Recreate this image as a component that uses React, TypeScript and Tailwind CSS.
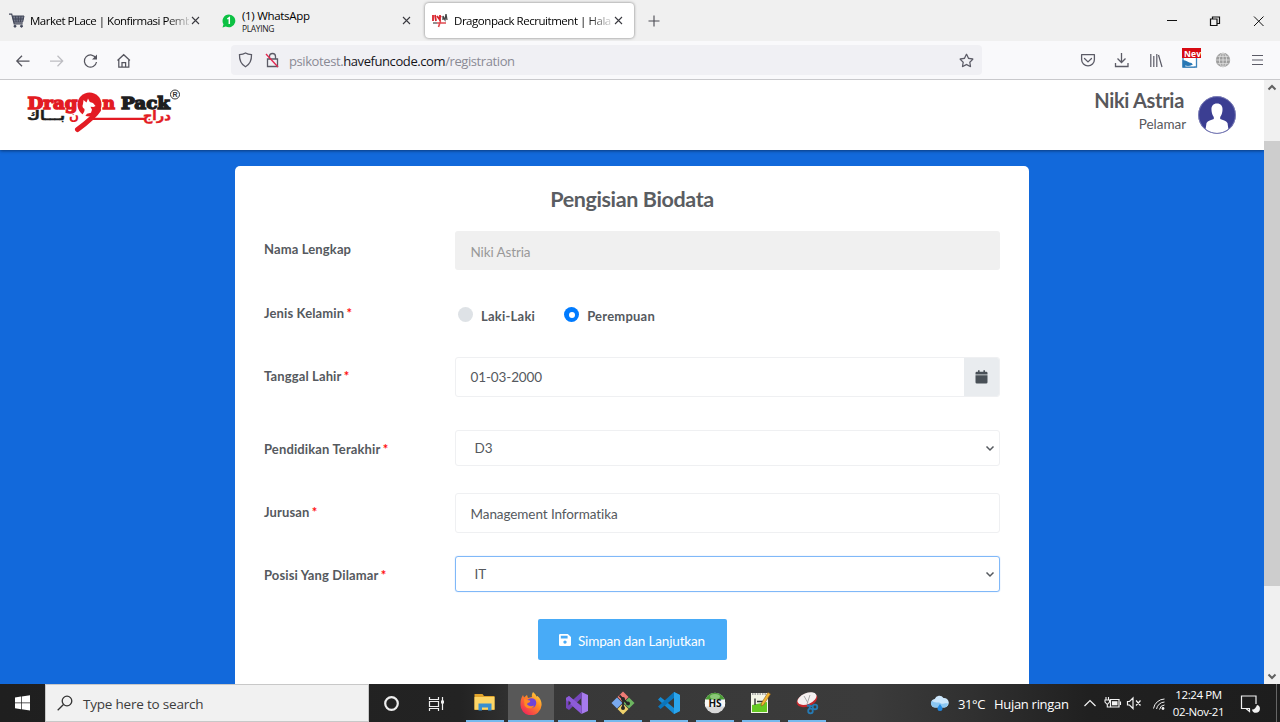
import React from "react";
import { FaRegStar } from "react-icons/fa";

const UI = "font-['Open_Sans','Noto_Sans',sans-serif]";

function Close() {
  return (
    <svg width="9" height="9" viewBox="0 0 9 9" className="shrink-0" fill="none" stroke="#3a3a40" strokeWidth="1.1">
      <path d="M1 1l7 7M8 1l-7 7" />
    </svg>
  );
}

function TabBar() {
  return (
    <div className={`flex h-[41px] w-full shrink-0 bg-[#f0f0f0] text-black ${UI}`}>
      <div className="flex w-[212px] shrink-0 items-center pl-[9px]">
        <svg width="16" height="16" viewBox="0 0 16 16" className="shrink-0" fill="none" stroke="#414658">
          <path d="M0 1.2h2.7l2.5 9.6h8.5" strokeWidth="1.2" />
          <path d="M3.5 3H15l-1.4 6.2H5z" fill="#777c8d" strokeWidth="1" />
          <path d="M6.5 3l.6 6M9.3 3v6M12 3l-.6 6M4 6h10.3" strokeWidth="1" />
          <circle cx="6" cy="13.2" r="1" fill="#414658" />
          <circle cx="12.5" cy="13.2" r="1" fill="#414658" />
        </svg>
        <div className="ml-[5px] w-[159px] overflow-hidden whitespace-nowrap text-[11.5px] leading-[16px] tracking-[-0.5px] [mask-image:linear-gradient(90deg,#000_86%,rgba(0,0,0,0.15)_100%)]">
          Market PLace | Konfirmasi Pemb
        </div>
        <div className="ml-[2px]"><Close /></div>
      </div>
      <div className="flex w-[212px] shrink-0 items-center pl-[10px]">
        <svg width="14" height="14" viewBox="0 0 14 14" className="shrink-0">
          <path d="M7 .5a6.4 6.4 0 1 1-3.2 12L.5 13.4l1-3.2A6.4 6.4 0 0 1 7 .5z" fill="#0cc143" />
          <path d="M5.300 5l2-1.400V10" stroke="#fff" strokeWidth="1.500" fill="none" />
        </svg>
        <div className="ml-[6px] w-[160px] pt-[2px]">
          <div className="text-[11.5px] leading-[14px] tracking-[-0.3px]">(1) WhatsApp</div>
          <div className="text-[8.5px] leading-[11px] tracking-[-0.35px] text-[#222]">PLAYING</div>
        </div>
        <Close />
      </div>
      <div className="mt-[3px] ml-px flex h-[35px] w-[209px] shrink-0 items-center rounded-[4px] bg-white pl-[7px] shadow-[0_0_3px_rgba(0,0,0,0.5)]">
        <svg width="16" height="15" viewBox="0 0 16 15" className="shrink-0">
          <path d="M1 2v6M3 2l1 6M5 3l3 4M8 2v6M7 6l2-3" stroke="#d9242d" strokeWidth="1.800" fill="none" />
          <path d="M11 7V3l2 4 1-6 1 6" stroke="#444" strokeWidth="1.300" fill="none" />
          <path d="M1 10h4" stroke="#555" strokeWidth="1.3" />
          <path d="M5 10h9M8.500 8l-2 6" stroke="#e04a50" strokeWidth="1.6" />
        </svg>
        <div className="ml-[6px] w-[157px] overflow-hidden whitespace-nowrap text-[11.5px] leading-[16px] tracking-[-0.46px] [mask-image:linear-gradient(90deg,#000_84%,rgba(0,0,0,0.15)_100%)]">
          Dragonpack Recruitment | Hala
        </div>
        <div className="ml-[3px]"><Close /></div>
      </div>
      <div className="flex w-[40px] items-center justify-center">
        <svg width="12" height="12" viewBox="0 0 12 12" stroke="#4a4a52" strokeWidth="1.1"><path d="M6 .5v11M.5 6h11" /></svg>
      </div>
      <div className="ml-auto flex w-[130px] items-center">
        <svg width="130" height="20" viewBox="0 0 130 20" fill="none" stroke="#111" strokeWidth="1">
          <path d="M17 9.500h10" />
          <path d="M60.500 8h6.500v6.500h-6.500zM62.500 8v-2h7v6.500h-2.500" strokeWidth="1.2" />
          <path d="M104 5.500l9.500 9.500M113.500 5.500l-9.500 9.500" strokeWidth="1" />
        </svg>
      </div>
    </div>
  );
}

function Toolbar() {
  return (
    <div className={`flex h-[39px] w-full shrink-0 items-center border-b border-[#c9c9cc] bg-[#f9f9fb] ${UI}`}>
      <svg width="231" height="38" viewBox="0 41 231 38" className="shrink-0" fill="none" stroke="#55555e" strokeWidth="1.250">
        <path d="M29.500 61H17M22 55.800L16.800 61l5.200 5.200" />
        <path d="M50 61h12.500M57.500 55.800l5.200 5.200-5.200 5.200" stroke="#bdbdc2" />
        <path d="M96 58.500a6.100 6.100 0 1 0 .5 3.500" />
        <path d="M97 54.500v5h-5z" fill="#55555e" stroke="none" />
        <path d="M117.500 60.500l6.200-5.800 6.200 5.800M118.800 59.500v7.500h10v-7.500M122 67v-4.500h3.600V67" />
      </svg>
      <div className="flex h-[30px] w-[751px] shrink-0 items-center rounded-[4px] bg-[#f0f0f4] pl-[7px]">
        <svg width="44" height="20" viewBox="0 0 44 20" className="shrink-0" fill="none" stroke="#5b5b66" strokeWidth="1.300">
          <path d="M7.500 3c2 1.300 4 1.600 6 1.700.2 5.500-1.500 9.500-6 12-4.500-2.500-6.200-6.500-6-12 2-.1 4-.4 6-1.700z" />
          <path d="M29.500 9h10v7.500h-10zM31.500 9V6.500a3 3 0 0 1 6 0V9" />
          <path d="M28 4l12 13" stroke="#e22850" strokeWidth="1.400" />
        </svg>
        <div className="ml-[7px] pt-[2px] text-[13px] leading-[18px] tracking-[-0.41px] text-[#8a8a94]">
          psikotest.<span className="text-[#15141a]">havefuncode.com</span>/registration
        </div>
        <FaRegStar className="mr-[8px] ml-auto text-[#5b5b66]" size={15} />
      </div>
      <svg width="210" height="38" viewBox="1070 41 210 38" className="ml-auto shrink-0" fill="none" stroke="#5b5b66" strokeWidth="1.300">
        <path d="M1081.600 54.700h12.800v4.800a6.400 6.400 0 0 1-12.800 0zM1084.500 58.500l3.500 3.400 3.500-3.400" strokeLinejoin="round" strokeLinecap="round" />
        <path d="M1121.500 53v9M1117.500 58.500l4 4 4-4M1115.500 63v3.500h12.500V63" />
        <path d="M1150.800 54v13M1153.800 56v11M1156.800 54v13M1158.500 55l3.500 12" strokeWidth="1.200" />
        <path d="M1183 55h13.500v12h-13.500z" fill="#fff" stroke="#3c83bb" />
        <path d="M1182.500 60c4 0 6 3 9 3l4 4.500h-13z" fill="#2877b4" stroke="none" />
        <path d="M1185 65.500c4 1 8 0 9.500-3v4h-9z" fill="#fff" stroke="none" />
        <path d="M1182 48h19v10h-19z" fill="#d70a13" stroke="none" />
        <text x="1184" y="56.500" fontSize="8.500" fontWeight="bold" fill="#fff" stroke="none" fontFamily="Open Sans" textLength="17">Nev</text>
        <circle cx="1223" cy="60" r="7.200" fill="#9d9d9d" stroke="none" />
        <path d="M1223 53v14M1216 60h14M1217.500 56.300h11M1217.500 63.700h11" stroke="#e4e4e4" strokeWidth=".8" />
        <ellipse cx="1223" cy="60" rx="3.600" ry="7" stroke="#e4e4e4" strokeWidth=".8" />
        <path d="M1252 55.500h11M1252 60h11M1252 64.500h11" strokeWidth="1.200" />
      </svg>
    </div>
  );
}

function Logo() {
  return (
    <svg width="160" height="46" viewBox="24 87 160 46" className="mt-[7px] ml-[24px] shrink-0">
      <g fontFamily="DejaVu Serif" fontWeight="bold" fontSize="17" strokeWidth="1.400">
        <text x="27.500" y="109.300" fill="#e31b23" stroke="#e31b23" textLength="50" lengthAdjust="spacingAndGlyphs">Drag</text>
        <text x="102.500" y="109.300" fill="#e31b23" stroke="#e31b23" textLength="12.500" lengthAdjust="spacingAndGlyphs">n</text>
        <text x="121" y="109.300" fill="#1e1e1e" stroke="#1e1e1e" textLength="49" lengthAdjust="spacingAndGlyphs">Pack</text>
      </g>
      <circle cx="89.500" cy="104.500" r="12" fill="#e31b23" />
      <path d="M80 119c1-4 5-6 4.500-10-2-1-2.500-3-1.500-5l.5-4 3 2.500 1.500-4 1.800 3.500 3.200 1 2.500 3-2 1-3-.3 1.500 3-1 3-4 1-3 4z" fill="#fff" />
      <path d="M98.500 110c-4 6.500-11.500 12.500-21 19.500" stroke="#e31b23" strokeWidth="5" strokeLinecap="round" fill="none" />
      <path d="M90 118.800h55" stroke="#e31b23" strokeWidth="2.200" />
      <g fontFamily="DejaVu Sans" fontWeight="bold" fontSize="13">
        <text x="143" y="120" fill="#e31b23" stroke="#e31b23" strokeWidth=".4" textLength="28" lengthAdjust="spacingAndGlyphs">دراج</text>
        <text x="69" y="119.500" fill="#e31b23" textLength="10" lengthAdjust="spacingAndGlyphs">ن</text>
        <text x="27" y="120" fill="#1e1e1e" stroke="#1e1e1e" strokeWidth=".4" textLength="38" lengthAdjust="spacingAndGlyphs">بـــاك</text>
      </g>
      <circle cx="175" cy="94.500" r="4.500" fill="none" stroke="#333" strokeWidth="1" />
      <text x="175" y="97" textAnchor="middle" fontSize="7" fontWeight="bold" fill="#333" fontFamily="Liberation Sans">R</text>
    </svg>
  );
}

function Header() {
  return (
    <header className="relative flex h-[70px] shrink-0 bg-white shadow-[0_1px_3px_rgba(0,0,0,0.45)]">
      <Logo />
      <div className="mt-[8px] mr-[12px] ml-auto text-right text-[#58585c]">
        <div className="mr-[2px] text-[20px] leading-[25px] font-bold tracking-[-0.3px]">Niki Astria</div>
        <div className="mt-[2px] text-[13.500px] leading-[18px] tracking-[-0.05px]">Pelamar</div>
      </div>
      <svg width="38" height="38" viewBox="0 0 38 38" className="mt-[16px] mr-[28px]">
        <circle cx="19" cy="19" r="18.800" fill="#3b3e92" />
        <path d="M19 7.500c3.800 0 5.800 2.500 5.500 6.500-.2 4-2 8.500-5.500 8.500s-5.300-4.500-5.500-8.500c-.3-4 1.700-6.500 5.500-6.500z" fill="#fff" />
        <path d="M15.800 19h6.400v4c2.500 1.200 6 1.600 7.300 4l.9 6a18 18 0 0 1-22.800 0l.9-6c1.300-2.400 4.800-2.800 7.300-4z" fill="#fff" />
        <circle cx="19" cy="19" r="18.400" fill="none" stroke="#8385bb" strokeWidth=".8" />
      </svg>
    </header>
  );
}

function Row({ label, required, children }: { label: string; required?: boolean; children: React.ReactNode }) {
  return (
    <div className="flex h-[63px] items-start">
      <div className="w-[190.500px] shrink-0 pt-[10px] text-[13px] leading-[18px] font-bold tracking-[0.13px] text-[#55595e]">
        {label}
        {required && <span className="-ml-px text-[#f11]"> *</span>}
      </div>
      <div className="w-[545.500px]">{children}</div>
    </div>
  );
}

function Select({ value, focused }: { value: string; focused?: boolean }) {
  return (
    <div className={`flex h-[36px] items-center justify-between rounded-[3px] border pr-[4px] pl-[19px] text-[13.500px] leading-[18px] ${focused ? "border-[#80b8f8] shadow-[0_0_1px_#80b8f8]" : "border-[#eff0f2]"}`}>
      <span>{value}</span>
      <svg width="10" height="7" viewBox="0 0 10 7" fill="none" stroke="#55595e" strokeWidth="1.500"><path d="M1.500 1.500L5 5l3.500-3.500" /></svg>
    </div>
  );
}

function Radio({ label, checked }: { label: string; checked?: boolean }) {
  return (
    <div className="flex items-center">
      <span className={`flex size-[15px] items-center justify-center rounded-full ${checked ? "bg-[#007bff]" : "bg-[#dee2e6]"}`}>
        {checked && <span className="size-[6px] rounded-full bg-white" />}
      </span>
      <span className="ml-[8px] pt-[2px] text-[13px] leading-[18px] font-bold tracking-[0.23px] text-[#55595e]">{label}</span>
    </div>
  );
}

function Form() {
  return (
    <main className="mx-auto mt-[16px] h-[600px] w-[794px] shrink-0 rounded-[5px] bg-white pl-[29px] text-[#55595e]">
      <h1 className="mr-[29px] pt-[18px] text-center text-[21.500px] leading-[30px] font-bold tracking-[-0.38px] text-[#5a5d62]">Pengisian Biodata</h1>
      <div className="mt-[16px] text-[13.500px] tracking-[-0.12px]">
        <div className="h-[64px]">
          <Row label="Nama Lengkap">
            <div className="pt-px">
              <div className="flex h-[39px] items-center rounded-[3px] bg-[#f0f0f0] pt-[2px] pl-[16px] leading-[18px] text-[#999]">Niki Astria</div>
            </div>
          </Row>
        </div>
        <Row label="Jenis Kelamin" required>
          <div className="flex gap-[29px] pt-[10.500px] pl-[3.500px]">
            <Radio label="Laki-Laki" />
            <Radio label="Perempuan" checked />
          </div>
        </Row>
        <div className="h-[73px]">
          <Row label="Tanggal Lahir" required>
            <div className="flex h-[40px] overflow-hidden rounded-[3px] border border-[#eff0f2]">
              <div className="flex flex-1 items-center pl-[15px] leading-[18px]">01-03-2000</div>
              <div className="flex w-[35px] items-center justify-center bg-[#e9ecef]">
                <svg width="13" height="14" viewBox="0 0 13 14" fill="#495057">
                  <path d="M.5 4.500V3a1.300 1.300 0 0 1 1.300-1.300H3V.3h1.600v1.400h3.800V.3H10v1.400h1.200A1.300 1.300 0 0 1 12.500 3v1.500zM.5 5.300h12v7a1.300 1.300 0 0 1-1.300 1.300H1.800a1.300 1.300 0 0 1-1.300-1.300z" />
                </svg>
              </div>
            </div>
          </Row>
        </div>
        <Row label="Pendidikan Terakhir" required><Select value="D3" /></Row>
        <Row label="Jurusan" required>
          <div className="flex h-[40px] items-center rounded-[3px] border border-[#eff0f2] pt-[2px] pl-[15px] leading-[18px] tracking-[-0.08px]">Management Informatika</div>
        </Row>
        <Row label="Posisi Yang Dilamar" required><Select value="IT" focused /></Row>
      </div>
      <div className="mr-[29px] flex justify-center">
        <button className="flex h-[41px] w-[189px] items-center justify-center rounded-[2px] bg-[#48abf7] pt-[2px] text-[13.500px] leading-[18px] tracking-[-0.15px] text-white">
          <svg width="12" height="12" viewBox="0 0 12 12" className="mr-[7px] mb-[2px]">
            <path fillRule="evenodd" fill="#fff" d="M1.300 0h7.500L12 3v7.700a1.300 1.300 0 0 1-1.300 1.300H1.300A1.300 1.300 0 0 1 0 10.700V1.300A1.300 1.300 0 0 1 1.300 0zM1.800 1.800v2.600h6.800V1.800zM6 6.400a1.700 1.700 0 1 0 0 3.400 1.700 1.700 0 0 0 0-3.400z" />
          </svg>
          Simpan dan Lanjutkan
        </button>
      </div>
    </main>
  );
}

function Scrollbar() {
  return (
    <div className="flex w-[16px] shrink-0 flex-col items-center bg-[#f0f0f0]">
      <svg width="16" height="61" viewBox="0 0 16 61" fill="none" stroke="#606060" strokeWidth="2"><path d="M4.500 9.500L8 6l3.500 3.500" /></svg>
      <div className="h-[445px] w-full bg-[#cdcdcd]" />
      <svg width="16" height="16" viewBox="0 0 16 16" className="mt-auto" fill="none" stroke="#606060" strokeWidth="2"><path d="M4.500 6.500L8 10l3.500-3.500" /></svg>
    </div>
  );
}

function TaskIcon({ children, active }: { children: React.ReactNode; active?: boolean }) {
  return (
    <div className={`flex h-[38px] w-[46px] shrink-0 flex-col items-center justify-between pt-[7px] ${active ? "bg-[#585858]" : ""}`}>
      <svg width="24" height="24" viewBox="0 0 24 24">{children}</svg>
      <div className={`h-[2px] bg-[#76b9ed] ${active ? "w-full" : "w-[38px]"}`} />
    </div>
  );
}

function Taskbar() {
  return (
    <div className={`flex h-[38px] w-full shrink-0 bg-[linear-gradient(90deg,#1f1f1f_0%,#232323_36%,#383838_42%,#3b3b3b_68%,#303030_76%,#202020_85%,#1d1d1d_100%)] ${UI}`}>
      <div className="flex w-[45px] shrink-0 items-center justify-center">
        <svg width="15" height="16" viewBox="0 0 15 16" fill="#fff"><path d="M0 2.500l6-.9v5.900H0zM6.700 1.500L15 .3v7.200H6.700zM0 8.300h6v5.900l-6-.9zM6.700 8.300H15v7.200l-8.300-1.200z" /></svg>
      </div>
      <div className="flex w-[324px] shrink-0 items-center border border-[#c8c8c8] bg-[#f1f1f1] pl-[11px]">
        <svg width="16" height="16" viewBox="0 0 16 16" fill="none" stroke="#333" strokeWidth="1.300"><circle cx="10" cy="6" r="4.800" /><path d="M6.500 9.500L.7 15.300" /></svg>
        <span className="ml-[10px] pt-px text-[13.500px] leading-[20px] tracking-[-0.2px] text-[#3c3c3c]">Type here to search</span>
      </div>
      <div className="flex w-[93px] shrink-0 items-center">
        <svg width="93" height="38" viewBox="369 684 93 38" fill="none" stroke="#eee">
          <circle cx="391.500" cy="703.500" r="6.300" strokeWidth="2.200" />
          <path d="M429.500 697v2.500h9V697M429.500 701.500h9v5h-9zM429.500 711v-2.500h9v2.500M442.500 697v13" strokeWidth="1.200" />
          <path d="M441 700.500h3v3h-3z" fill="#eee" stroke="none" />
        </svg>
      </div>
      <TaskIcon>
        <path d="M1.500 3h8l1.500 2h10.500v14h-20z" fill="#e2a42b" />
        <path d="M1.500 6h20v12.500h-20z" fill="#fdd667" />
        <path d="M5.500 19.500v-7h13v7h-3.500v-3H9v3z" fill="#3a8fd0" />
      </TaskIcon>
      <TaskIcon active>
        <defs>
          <linearGradient id="ff" x1="1" y1="0" x2=".2" y2="1"><stop offset="0" stopColor="#ffe94a" /><stop offset=".45" stopColor="#ff8a24" /><stop offset="1" stopColor="#f0205c" /></linearGradient>
        </defs>
        <path d="M14 1c2 1.500 3 3 3.500 4.500l1-.5c3 2.500 4.500 6 4 9.500A10.500 10.500 0 0 1 1.500 13C1.500 9.500 2 7 4 4l1 2.500L8 4l1 3 4-1c-.5-2 0-3.500 1-5z" fill="url(#ff)" />
        <circle cx="12.500" cy="12" r="4.800" fill="#7044d8" />
        <path d="M5 8c3 0 3.500 1.500 6 1.500 1 2-2 2-3 3.500 1 2 4 3 7 1.500-1 3.500-7 4-9.500 0z" fill="#ff8a24" />
      </TaskIcon>
      <TaskIcon>
        <path d="M16.500 1L23 4v16l-6.500 3z" fill="#a77bee" />
        <path d="M16.500 1v6L4 19l-3-2V7l3-2 12.500 12v6L7 14.500 4.500 12 16.500 1z" fill="#7545bc" />
        <path d="M1 7l3-2 12.500 10v8L1 9z" fill="#8d5bd8" />
        <path d="M3.500 9.500v5L6 12z" fill="#353535" />
      </TaskIcon>
      <TaskIcon>
        <path d="M12 .5l5.500 5.500L12 11.500 6.500 6z" fill="#ee7b75" />
        <path d="M6 6.500l5.500 5.500L6 17.500.5 12z" fill="#79a9ed" />
        <path d="M18 6.500l5.500 5.500-5.500 5.500-5.500-5.500z" fill="#6cb560" />
        <path d="M12 12.500l5.500 5.500-5.500 5.500L6.500 18z" fill="#f0d26c" />
        <path d="M8.500 4.500l3.500 3.500v9M12 8l5 5" fill="none" stroke="#272727" strokeWidth="1.800" />
        <circle cx="12" cy="8" r="2" fill="#272727" /><circle cx="12" cy="17" r="2" fill="#272727" /><circle cx="17" cy="12.500" r="2" fill="#272727" />
      </TaskIcon>
      <TaskIcon>
        <path d="M17 1l6 3v16l-6 3L1 8.500 3.500 6 17 17z" fill="#168bd4" />
        <path d="M17 1v6L3.500 18 1 15.500z" fill="#0b75bb" />
        <path d="M17 1l6 3v16l-6 3z" fill="#2aa5ed" />
      </TaskIcon>
      <TaskIcon>
        <circle cx="12" cy="12" r="10.300" fill="#d9d9d9" />
        <path d="M1.700 12a10.300 10.300 0 0 1 20.600 0z" fill="#4a9b35" />
        <ellipse cx="12" cy="5.500" rx="5" ry="2.500" fill="#8bc778" />
        <path d="M2 8.500h20v7H2z" fill="#f7f7f7" />
        <text x="12" y="15.700" textAnchor="middle" fontSize="10" fontWeight="bold" fill="#111" fontFamily="Open Sans">HS</text>
      </TaskIcon>
      <TaskIcon>
        <path d="M2 2h17v20H2z" fill="#f5f6e8" />
        <path d="M3 14l15-3v10H3z" fill="#65c923" />
        <path d="M3 3h15" stroke="#aaa" strokeWidth="2" strokeDasharray="1.500 1" />
        <path d="M6 7.500v6.500M8 10.500h6" stroke="#333" strokeWidth="1.400" />
        <path d="M19 1.500l2.500 1.500-7 11-2.500 1 .5-3z" fill="#f2b632" stroke="#8a5b20" strokeWidth=".6" />
      </TaskIcon>
      <TaskIcon>
        <ellipse cx="12" cy="9" rx="10.800" ry="6.500" transform="rotate(-22 12 9)" fill="#c5282d" />
        <ellipse cx="12" cy="7.600" rx="10" ry="5.500" transform="rotate(-22 12 7.600)" fill="#f4f1f1" />
        <path d="M9 5l4 7M15 4l-3 9" stroke="#aaa" strokeWidth="1" />
        <g fill="none" stroke="#267bb5" strokeWidth="1.800"><circle cx="15.500" cy="20" r="2.300" /><circle cx="20" cy="16" r="2.300" /><path d="M12 14.500l6 .8M14 13.500l1.200 4.200" /></g>
      </TaskIcon>
      <div className="ml-auto flex shrink-0 items-center text-white">
        <svg width="19" height="16" viewBox="0 0 19 16" className="mr-[9px]">
          <path d="M5 12.500a4.300 4.300 0 0 1-.3-8.500A5 5 0 0 1 13.500 3a4.500 4.500 0 0 1 1 9.500z" fill="#cce7fc" />
          <path d="M5 12.500a4.300 4.300 0 0 1-3-7c2 3 7 1 9 3 2 1 4-1 7 0a4.500 4.500 0 0 1-3.500 4z" fill="#8cc7f2" />
          <path d="M10 9c2 3 2.500 3.500 2.500 4.500a2.500 2.500 0 0 1-5 0C7.500 12.500 8 12 10 9z" fill="#2388df" />
        </svg>
        <span className="w-[36px] pt-[2px] text-[13px] leading-[20px] tracking-[-0.4px]">31°C</span>
        <span className="w-[76px] whitespace-nowrap pt-[2px] text-[13px] leading-[20px] tracking-[-0.3px]">Hujan ringan</span>
        <svg width="98" height="38" viewBox="1070 684 98 38" fill="none" stroke="#f2f2f2" strokeWidth="1.200">
          <path d="M1084.500 706l5.500-5.500 5.500 5.500" />
          <path d="M1110.500 699.500h8.500v7.500h-8.500z" /><path d="M1112 701.200h5.500v4.100h-5.500z" fill="#f2f2f2" stroke="none" />
          <path d="M1120.500 701.500v3.500M1106 697v2.500M1108.500 697v2.500M1105 700h4.500v2l-1.700 2h-1l-1.800-2zM1107.300 704v3h3" strokeWidth="1.100" />
          <path d="M1127.500 701.500h2l3.500-3.500v10.500l-3.500-3.500h-2zM1136 700.500l4.500 5M1140.500 700.500l-4.500 5" />
          <path d="M1153.500 708.500a11.500 11.500 0 0 1 11-9.500M1156.500 709a8.500 8.500 0 0 1 8-7M1159.500 709.500a5.500 5.500 0 0 1 5-4.500" strokeWidth="1" />
          <circle cx="1163" cy="708.500" r="1.400" fill="#f2f2f2" stroke="none" />
        </svg>
        <div className="mr-px w-[61px] whitespace-nowrap text-center text-[11.500px] leading-[17px] tracking-[-0.4px]">
          <div>12:24 PM</div>
          <div>02-Nov-21</div>
        </div>
        <svg width="50" height="38" viewBox="1230 684 50 38" fill="none" stroke="#f2f2f2" strokeWidth="1.200">
          <path d="M1250 708.500h-8.500V696h14.500v8M1246 708.500l3.500 3v-3" />
          <path d="M1257 705a4 4 0 1 1-5 4.500c2 .5 4-1.500 5-4.500z" fill="#f2f2f2" stroke="none" />
          <path d="M1276.500 684v38" stroke="#666" strokeWidth="1" />
        </svg>
      </div>
    </div>
  );
}

export default function App() {
  return (
    <div className="flex h-[722px] w-[1280px] flex-col overflow-hidden">
      <TabBar />
      <Toolbar />
      <div className="flex h-[604px] shrink-0">
        <div className="flex flex-1 flex-col overflow-hidden bg-[#1269db] font-[Lato,sans-serif]">
          <Header />
          <Form />
        </div>
        <Scrollbar />
      </div>
      <Taskbar />
    </div>
  );
}
